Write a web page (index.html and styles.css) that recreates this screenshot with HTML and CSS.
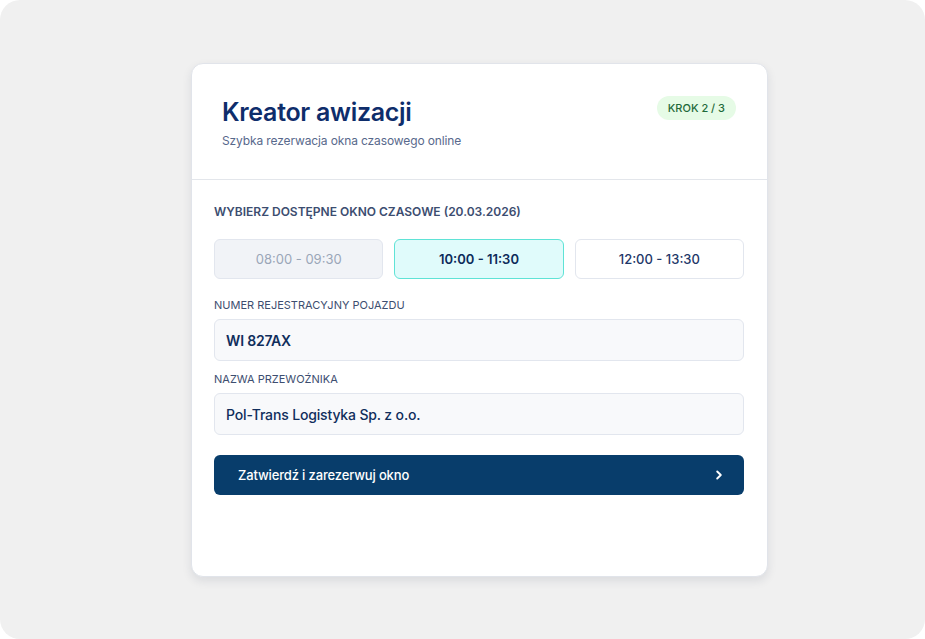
FILE: index.html
```html
<!DOCTYPE html>
<html lang="pl">
<head>
<meta charset="utf-8">
<title>Kreator awizacji</title>
<link rel="stylesheet" href="styles.css">
</head>
<body>
<div class="page">
  <div class="card">
    <header class="card-header">
      <div class="titles">
        <h1 class="title">Kreator awizacji</h1>
        <p class="subtitle">Szybka rezerwacja okna czasowego online</p>
      </div>
      <span class="badge">KROK 2 / 3</span>
    </header>
    <div class="card-body">
      <h2 class="section-label">WYBIERZ DOSTĘPNE OKNO CZASOWE (20.03.2026)</h2>
      <div class="slots">
        <button class="slot slot-disabled" type="button">08:00 - 09:30</button>
        <button class="slot slot-active" type="button">10:00 - 11:30</button>
        <button class="slot" type="button">12:00 - 13:30</button>
      </div>
      <div class="fields">
        <div class="field">
          <label class="field-label">NUMER REJESTRACYJNY POJAZDU</label>
          <div class="input input-strong">WI 827AX</div>
        </div>
        <div class="field">
          <label class="field-label">NAZWA PRZEWOŹNIKA</label>
          <div class="input">Pol-Trans Logistyka Sp. z o.o.</div>
        </div>
      </div>
      <button class="submit" type="button">
        <span>Zatwierdź i zarezerwuj okno</span>
        <svg class="chevron" width="12" height="12" viewBox="0 0 12 12" aria-hidden="true"><path d="M4.2 2.5 L7.8 6 L4.2 9.5" fill="none" stroke="#ffffff" stroke-width="1.9" stroke-linecap="round" stroke-linejoin="round"/></svg>
      </button>
    </div>
  </div>
</div>
</body>
</html>
```
FILE: styles.css
```css
* { box-sizing: border-box; }
html, body { margin: 0; padding: 0; background: #ffffff; }
body { font-family: "Inter", "Lato", "Noto Sans", sans-serif; }

.page {
  width: 925px;
  height: 639px;
  background: #f0f0f0;
  border-radius: 20px;
  display: flex;
  justify-content: flex-start;
  padding-top: 63px;
  padding-left: 191px;
}

.card {
  width: 577px;
  height: 514px;
  background: #ffffff;
  border: 1px solid #e1e4ea;
  border-radius: 12px;
  box-shadow: 0 4px 10px rgba(30, 40, 70, 0.10);
}

.card-header {
  display: flex;
  justify-content: space-between;
  align-items: flex-start;
  padding: 31px 31px 0 30px;
  height: 116px;
  border-bottom: 1px solid #e3e6eb;
}

.title {
  margin: 0;
  font-size: 25px;
  line-height: 34px;
  font-weight: 600;
  color: #0e2d6b;
  letter-spacing: -0.3px;
}

.subtitle {
  margin: 3px 0 0 0;
  font-size: 12px;
  line-height: 18px;
  color: #58698c;
  letter-spacing: -0.12px;
}

.badge {
  margin-top: 1px;
  display: inline-block;
  height: 24px;
  line-height: 24px;
  padding: 0 11px;
  border-radius: 12px;
  background: #e6fbe6;
  color: #1f6a3a;
  font-size: 11px;
  font-weight: 500;
}

.card-body {
  padding: 24px 23px 0 22px;
}

.section-label {
  margin: 0;
  font-size: 12px;
  line-height: 16px;
  font-weight: 600;
  color: #3c4d70;
}

.slots {
  display: grid;
  grid-template-columns: repeat(3, 1fr);
  gap: 11px;
  margin-top: 19px;
}

.slot {
  height: 40px;
  border-radius: 6px;
  border: 1px solid #e2e6ee;
  background: #ffffff;
  font-family: inherit;
  font-size: 13px;
  font-weight: 500;
  color: #1e3768;
  padding: 0;
}

.slot-disabled {
  background: #f1f3f7;
  color: #9aa6b8;
  font-weight: 400;
}

.slot-active {
  background: #e0fbfb;
  border-color: #5fe3d6;
  color: #0c2b5a;
  font-weight: 600;
}

.fields {
  display: flex;
  flex-direction: column;
  gap: 11px;
  margin-top: 19px;
}

.field {
  display: flex;
  flex-direction: column;
  gap: 7px;
}

.field-label {
  font-size: 11px;
  line-height: 14px;
  color: #3d4e70;
}

.input {
  height: 42px;
  display: flex;
  align-items: center;
  padding: 0 11px;
  background: #f8f9fb;
  border: 1px solid #e2e6ee;
  border-radius: 6px;
  font-size: 14px;
  font-weight: 500;
  color: #102e5c;
  letter-spacing: -0.15px;
}

.input-strong { font-weight: 600; }

.submit {
  margin-top: 20px;
  width: 100%;
  height: 40px;
  display: flex;
  align-items: center;
  justify-content: space-between;
  padding: 0 19px 0 24px;
  background: #083d6b;
  border: none;
  border-radius: 6px;
  color: #ffffff;
  font-family: inherit;
  font-size: 13px;
  font-weight: 500;
  letter-spacing: -0.15px;
}

.chevron { display: block; }
```
